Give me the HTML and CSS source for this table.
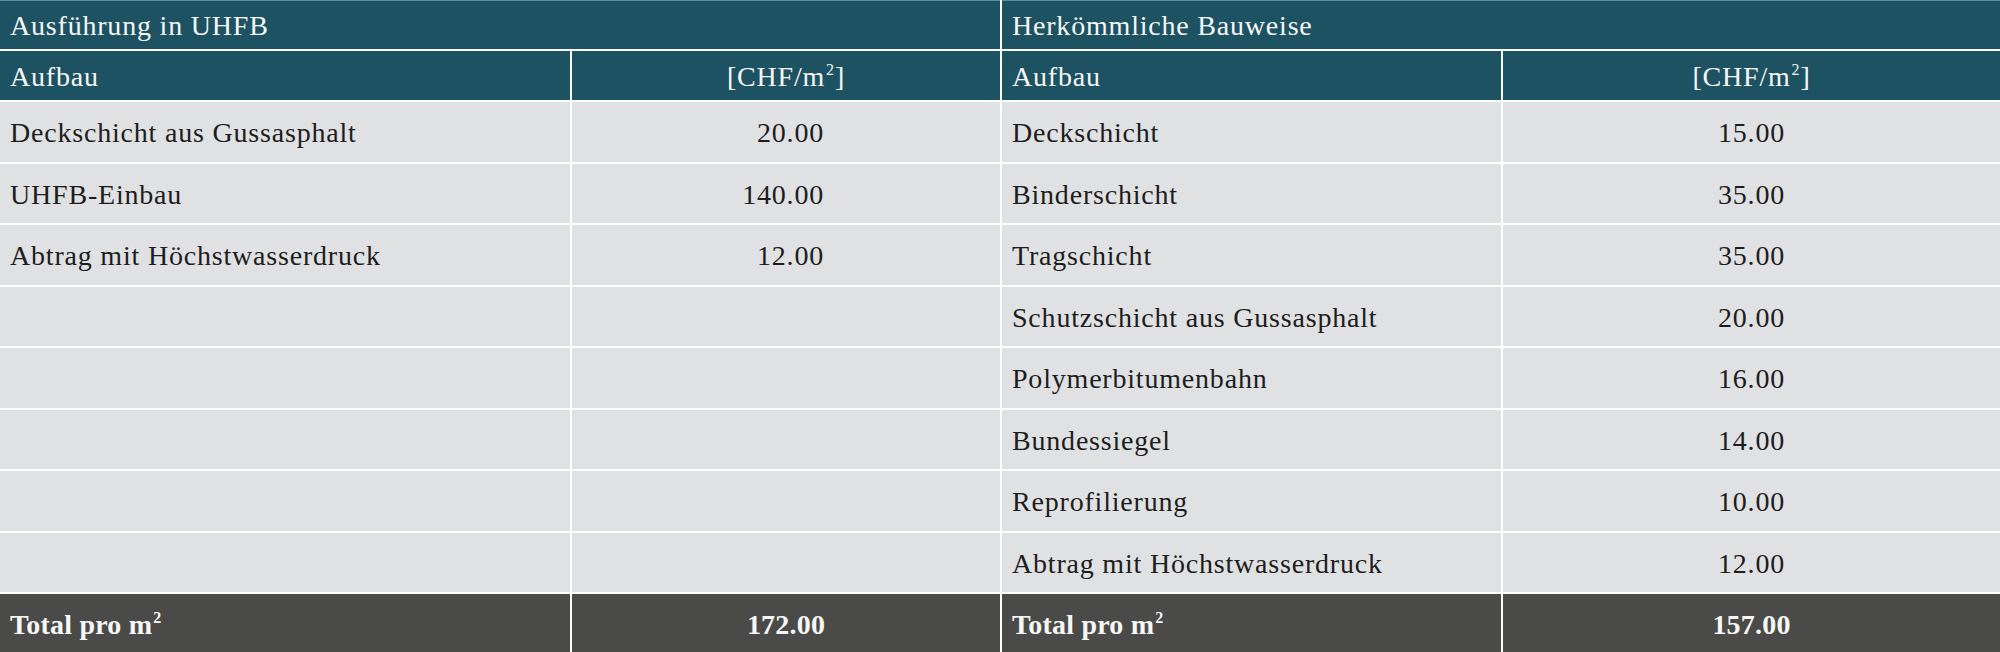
FILE: index.html
```html
<!DOCTYPE html>
<html lang="de">
<head>
<meta charset="utf-8">
<title>Kostenvergleich UHFB</title>
<link rel="stylesheet" href="styles.css">
</head>
<body>
<div class="compare">
  <div class="tbl tbl-left">
    <div class="cell title">Ausführung in UHFB</div>
    <div class="cell head">Aufbau</div>
    <div class="cell head num-head">[CHF/m<sup>2</sup>]</div>
    <div class="cell">Deckschicht aus Gussasphalt</div>
    <div class="cell val">20.00</div>
    <div class="cell">UHFB-Einbau</div>
    <div class="cell val">140.00</div>
    <div class="cell">Abtrag mit Höchstwasserdruck</div>
    <div class="cell val">12.00</div>
    <div class="cell"></div><div class="cell val"></div>
    <div class="cell"></div><div class="cell val"></div>
    <div class="cell"></div><div class="cell val"></div>
    <div class="cell"></div><div class="cell val"></div>
    <div class="cell"></div><div class="cell val"></div>
    <div class="cell total">Total pro m<sup>2</sup></div>
    <div class="cell total total-val">172.00</div>
  </div>
  <div class="tbl tbl-right">
    <div class="cell title">Herkömmliche Bauweise</div>
    <div class="cell head">Aufbau</div>
    <div class="cell head num-head">[CHF/m<sup>2</sup>]</div>
    <div class="cell">Deckschicht</div>
    <div class="cell val">15.00</div>
    <div class="cell">Binderschicht</div>
    <div class="cell val">35.00</div>
    <div class="cell">Tragschicht</div>
    <div class="cell val">35.00</div>
    <div class="cell">Schutzschicht aus Gussasphalt</div>
    <div class="cell val">20.00</div>
    <div class="cell">Polymerbitumenbahn</div>
    <div class="cell val">16.00</div>
    <div class="cell">Bundessiegel</div>
    <div class="cell val">14.00</div>
    <div class="cell">Reprofilierung</div>
    <div class="cell val">10.00</div>
    <div class="cell">Abtrag mit Höchstwasserdruck</div>
    <div class="cell val">12.00</div>
    <div class="cell total">Total pro m<sup>2</sup></div>
    <div class="cell total total-val">157.00</div>
  </div>
</div>
</body>
</html>
```

FILE: styles.css
```css
html, body {
  margin: 0;
  padding: 0;
  background: #ffffff;
}

body {
  width: 2000px;
  height: 652px;
  overflow: hidden;
  font-family: "Liberation Serif", "Times New Roman", serif;
  font-size: 28px;
  letter-spacing: 0.8px;
  color: #1d1d1d;
}

.compare {
  display: grid;
  grid-template-columns: 1000px 998px;
  column-gap: 2px;
  background: #ffffff;
}

.tbl {
  display: grid;
  grid-template-rows: 49px 49px repeat(8, 59.5px) 58px;
  row-gap: 2px;
  column-gap: 2px;
  background: #ffffff;
}

.tbl-left {
  grid-template-columns: 570px 428px;
}

.tbl-right {
  grid-template-columns: 499px 497px;
}

.cell {
  display: flex;
  align-items: center;
  box-sizing: border-box;
  padding: 3px 10px 0 10px;
  background: #e0e1e3;
  white-space: nowrap;
}

.title {
  grid-column: 1 / span 2;
  background: #1c5262;
  color: #f6f7f6;
  border-top: 1px solid #5f8c9a;
  padding-top: 2px;
}

.head {
  background: #1c5262;
  color: #f6f7f6;
}

.num-head {
  justify-content: center;
}

.tbl-left .val {
  justify-content: flex-end;
  padding-right: 176px;
}

.tbl-right .val {
  justify-content: center;
}

.total {
  background: #4a4a48;
  color: #f7f7f5;
  font-weight: bold;
  letter-spacing: 0.2px;
}

.total-val {
  justify-content: center;
}

sup {
  font-size: 16px;
  line-height: 0;
  vertical-align: baseline;
  position: relative;
  top: -7px;
  margin-left: 1px;
}
```
